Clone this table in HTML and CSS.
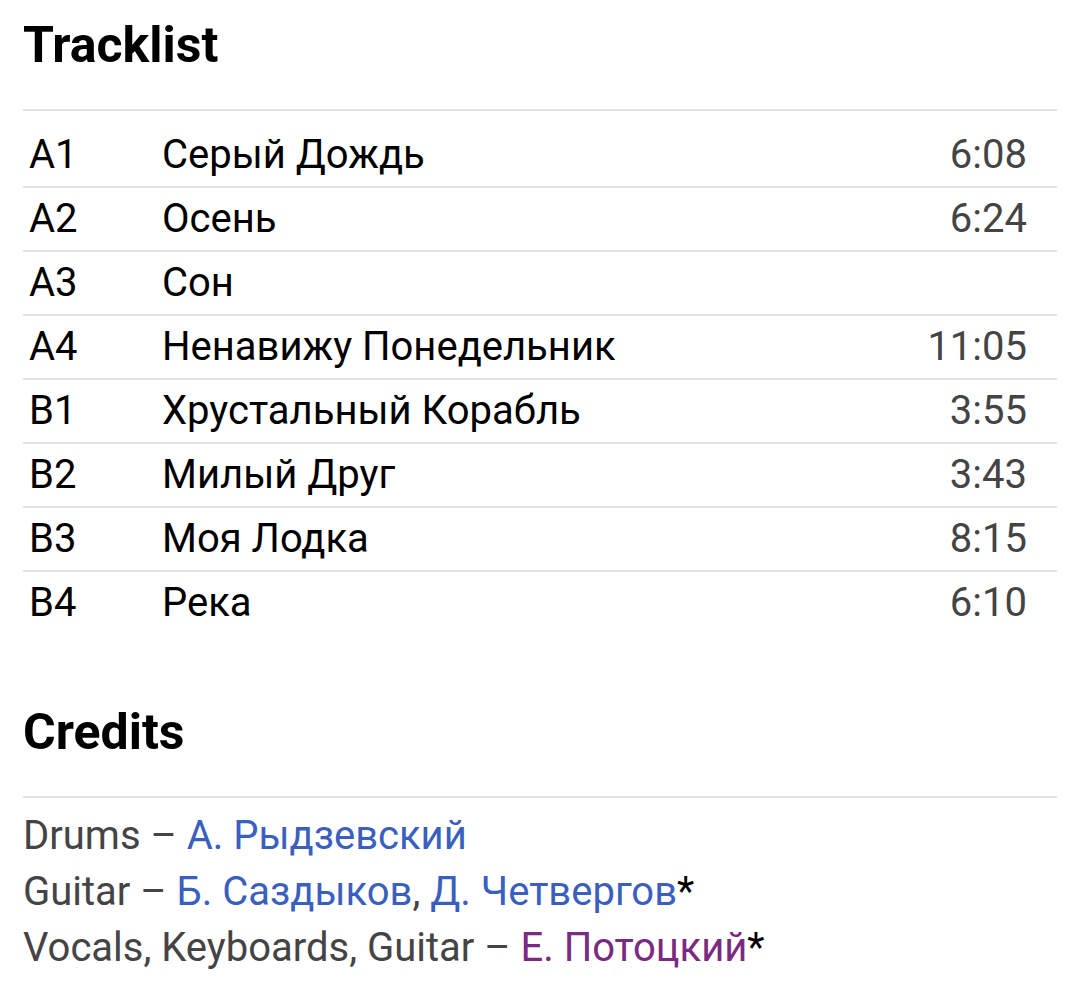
FILE: index.html
```html
<!DOCTYPE html>
<html lang="ru">
<head>
<meta charset="utf-8">
<title>Tracklist</title>
<link rel="stylesheet" href="styles.css">
</head>
<body>
<main class="page">
  <section class="section">
    <h2 class="section-title">Tracklist</h2>
    <table class="tracklist">
      <tbody>
        <tr><td class="pos">A1</td><td class="title">Серый Дождь</td><td class="dur">6:08</td></tr>
        <tr><td class="pos">A2</td><td class="title">Осень</td><td class="dur">6:24</td></tr>
        <tr><td class="pos">A3</td><td class="title">Сон</td><td class="dur"></td></tr>
        <tr><td class="pos">A4</td><td class="title">Ненавижу Понедельник</td><td class="dur">11:05</td></tr>
        <tr><td class="pos">B1</td><td class="title">Хрустальный Корабль</td><td class="dur">3:55</td></tr>
        <tr><td class="pos">B2</td><td class="title">Милый Друг</td><td class="dur">3:43</td></tr>
        <tr><td class="pos">B3</td><td class="title">Моя Лодка</td><td class="dur">8:15</td></tr>
        <tr><td class="pos">B4</td><td class="title">Река</td><td class="dur">6:10</td></tr>
      </tbody>
    </table>
  </section>
  <section class="section credits-section">
    <h2 class="section-title">Credits</h2>
    <ul class="credits">
      <li>Drums – <a class="link" href="#">А. Рыдзевский</a></li>
      <li>Guitar – <a class="link" href="#">Б. Саздыков</a>, <a class="link" href="#">Д. Четвергов</a><span class="star">*</span></li>
      <li>Vocals, Keyboards, Guitar – <a class="link visited" href="#">Е. Потоцкий</a><span class="star">*</span></li>
    </ul>
  </section>
</main>
</body>
</html>
```

FILE: styles.css
```css
html, body {
  margin: 0;
  padding: 0;
  background: #ffffff;
}

body {
  font-family: Roboto, "Liberation Sans", Arial, sans-serif;
  color: #000000;
}

.page {
  padding: 13px 23px 0 23px;
}

.section-title {
  margin: 0;
  font-size: 50px;
  font-weight: 700;
  line-height: 64px;
  padding-bottom: 32px;
  border-bottom: 2px solid #e4e4e4;
}

.tracklist {
  width: 100%;
  border-collapse: collapse;
  margin-top: 13px;
  font-size: 40px;
}

.tracklist tr {
  border-bottom: 2px solid #e4e4e4;
}

.tracklist tr:last-child {
  border-bottom: none;
}

.tracklist td {
  height: 62px;
  padding: 0;
  line-height: 62px;
  vertical-align: middle;
  white-space: nowrap;
}

.pos {
  width: 133px;
  padding-left: 6px !important;
}

.title {
  color: #000000;
}

.dur {
  text-align: right;
  color: #444444;
  padding-right: 30px !important;
}

.credits-section {
  margin-top: 66px;
}

.credits {
  list-style: none;
  margin: 10px 0 0 0;
  padding: 0;
  font-size: 40px;
  line-height: 56px;
  color: #444444;
}

.link {
  color: #3b5fbf;
  text-decoration: none;
}

.link.visited {
  color: #7a2a82;
}

.star {
  color: #000000;
}
```
